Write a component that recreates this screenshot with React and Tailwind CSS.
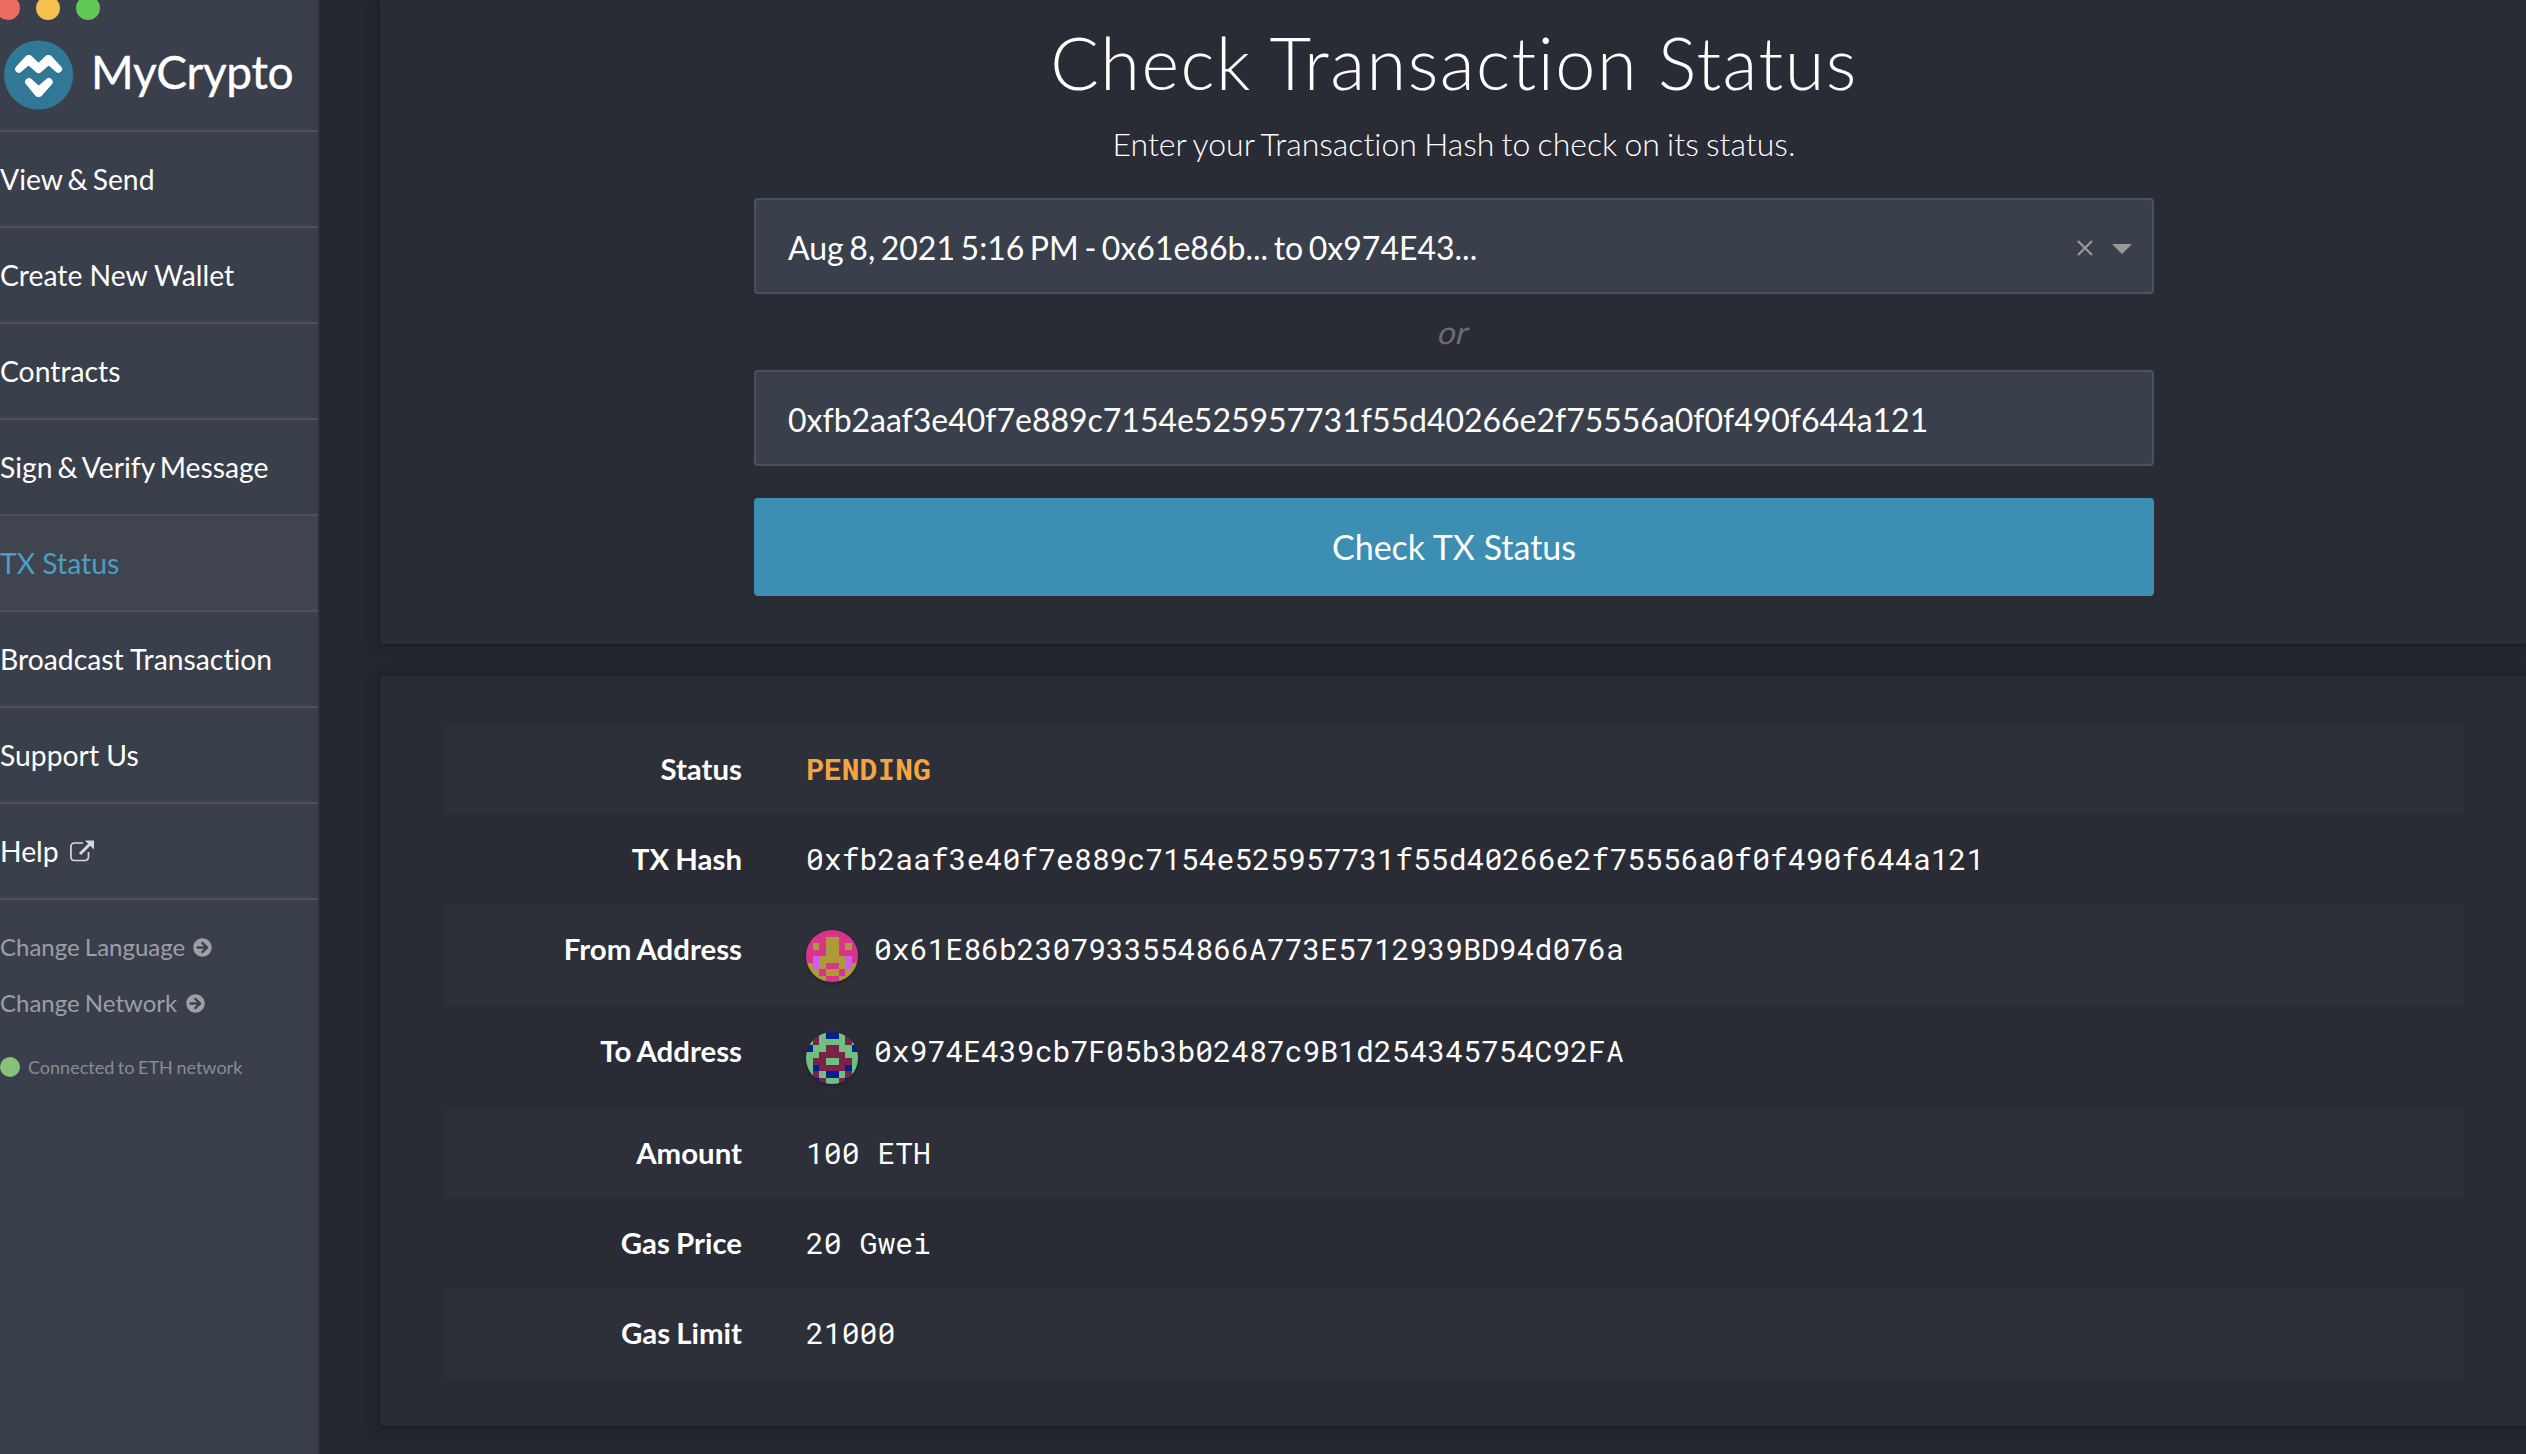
import React from "react";
import { FaArrowCircleRight } from "react-icons/fa";

const NAV = [
  "View & Send",
  "Create New Wallet",
  "Contracts",
  "Sign & Verify Message",
  "TX Status",
  "Broadcast Transaction",
  "Support Us",
  "Help",
];

const HASH = "0xfb2aaf3e40f7e889c7154e525957731f55d40266e2f75556a0f0f490f644a121";

// Left half of each 8x8 identicon; every row is mirrored when drawn.
const FROM_ICON = {
  colors: { a: "#d6358b", b: "#af9a3a", c: "#cf5cf6" },
  rows: ["aaaa", "aaab", "abab", "aaab", "acbb", "bcba", "bbab", "bbba"],
};
const TO_ICON = {
  colors: { a: "#6fbf80", b: "#7b2249", c: "#03208c" },
  rows: ["abac", "abaa", "caab", "aabb", "abba", "acbb", "abac", "acba"],
};

const ROWS = [
  { label: "Status", value: "PENDING", pending: true },
  { label: "TX Hash", value: HASH },
  { label: "From Address", value: "0x61E86b2307933554866A773E5712939BD94d076a", icon: FROM_ICON },
  { label: "To Address", value: "0x974E439cb7F05b3b02487c9B1d254345754C92FA", icon: TO_ICON },
  { label: "Amount", value: "100 ETH" },
  { label: "Gas Price", value: "20 Gwei" },
  { label: "Gas Limit", value: "21000" },
];

function Identicon({ icon }) {
  return (
    <div className="mt-[26px] mr-4 size-[52px] shrink-0 overflow-hidden rounded-full shadow-[0_2px_4px_rgba(0,0,0,0.25)]">
      <svg viewBox="0 0 8 8" className="block size-full" shapeRendering="crispEdges">
        {icon.rows.map((row, y) =>
          (row + row.split("").reverse().join("")).split("").map((c, x) => (
            <rect key={`${x}-${y}`} x={x} y={y} width="1" height="1" fill={icon.colors[c]} />
          ))
        )}
      </svg>
    </div>
  );
}

function Logo() {
  return (
    <div className="flex h-[70px] items-center pl-1">
      <svg viewBox="0 0 70 70" className="size-[70px] shrink-0" stroke="#fff" fill="#fff" strokeLinejoin="round">
        <circle cx="34.6" cy="35" r="34.600" fill="#317896" stroke="none" />
        <path
          d="M14.700 29.200L24.300 18.700H25.300L34.600 27.800L44 18.700H45L54.500 29.200L44.700 20.800L34.600 29.500L24.600 20.800Z"
          strokeWidth="7.200"
        />
        <path d="M24.900 41.900L34.600 50.600L44.900 41.900L34.900 53.200H34.300Z" strokeWidth="7.600" />
      </svg>
      <span className="ml-[17px] pb-1.5 text-[46px] leading-none tracking-[-0.3px] text-white [-webkit-text-stroke:0.4px_white]">
        MyCrypto
      </span>
    </div>
  );
}

function ExternalIcon() {
  return (
    <svg viewBox="0 0 24 22" className="ml-[11px] h-[22px] w-6" fill="none" stroke="#d6d7da">
      <path d="M13 3H4.5A3.700 3.700 0 0 0 .9 6.500V17A3.700 3.700 0 0 0 4.500 20.500H15A3.700 3.700 0 0 0 18.500 17V12" strokeWidth="1.700" />
      <path d="M10 14L20 4" strokeWidth="3" />
      <path d="M15 .5H24V9.500Z" fill="#d6d7da" stroke="none" />
    </svg>
  );
}

function Sidebar() {
  return (
    <aside className="flex h-full w-80 shrink-0 flex-col border-r-2 border-[#2b2f38] bg-[#3a404b]">
      <div className="flex h-5 items-end overflow-hidden">
        <div className="-ml-1 flex gap-4">
          <span className="size-6 rounded-full bg-[#ed6b60]" />
          <span className="size-6 rounded-full bg-[#f6c04f]" />
          <span className="size-6 rounded-full bg-[#61c755]" />
        </div>
      </div>
      <div className="h-[110px] pt-5">
        <Logo />
      </div>
      <nav className="border-t-2 border-[#4b505c] text-[28.300px] whitespace-nowrap">
        {NAV.map((item) => (
          <a
            key={item}
            className={
              "flex h-24 items-center border-b-2 border-[#4b505c] " +
              (item === "TX Status" ? "bg-[#3f444f] text-[#4a9fc4] " : "text-white ") +
              (item.includes("&") ? "[word-spacing:-2.200px]" : "[word-spacing:0px]")
            }
          >
            {item}
            {item === "Help" && <ExternalIcon />}
          </a>
        ))}
      </nav>
      <div className="mt-[19px] flex h-14 items-center text-2xl text-[#9c9fa5]">
        Change Language <FaArrowCircleRight className="ml-2 size-[19px]" />
      </div>
      <div className="flex h-14 items-center text-2xl text-[#9c9fa5]">
        Change Network <FaArrowCircleRight className="ml-[9px] size-[19px]" />
      </div>
      <div className="mt-4 flex h-10 items-center text-lg text-[#898c93]">
        <span className="mr-2 size-5 rounded-full bg-[#86c27a]" />
        Connected to ETH network
      </div>
    </aside>
  );
}

function CheckPanel() {
  return (
    <section className="flex h-[644px] flex-col items-center rounded-b bg-[#2a2c35] shadow-[0_1px_3px_rgba(0,0,0,0.3),0_2px_12px_rgba(34,34,34,0.9)]">
      <h1 className="mt-[17px] h-[90px] text-[72px] leading-[90px] font-light tracking-[1.500px] text-white">
        Check Transaction Status
      </h1>
      <p className="mt-[17px] h-10 text-[32px] leading-10 font-light [word-spacing:-1.500px] text-white">
        Enter your Transaction Hash to check on its status.
      </p>
      <div className="mt-[34px] flex h-24 w-[1400px] items-center rounded border-2 border-[#4b515f] bg-[#3a404b] pl-8 text-[32px] text-white">
        <span className="pt-[3px] [word-spacing:-2.600px]">Aug 8, 2021 5:16 PM - 0x61e86b... to 0x974E43...</span>
        <svg viewBox="0 0 56 16" className="mt-1 mr-5 ml-auto h-4 w-14" stroke="#999" fill="none">
          <path d="M2 1L16 15M16 1L2 15" strokeWidth="2.200" />
          <path d="M36 4H56L46 14Z" fill="#999" stroke="none" />
        </svg>
      </div>
      <div className="flex h-[76px] items-center text-[32px] text-[#6b6d74]">
        <span className="inline-block -skew-x-[14deg]">or</span>
      </div>
      <div className="flex h-24 w-[1400px] items-center rounded border-2 border-[#4b515f] bg-[#3a404b] pl-8 text-[32px] text-white">
        <span className="pt-[3px] tracking-[-0.020px]">{HASH}</span>
      </div>
      <button className="mt-8 h-[98px] w-[1400px] rounded bg-[#3c8eb3] pb-0.5 text-[34px] text-white">
        Check TX Status
      </button>
    </section>
  );
}

function DetailsPanel() {
  return (
    <section className="mt-8 h-[750px] rounded bg-[#2a2c35] px-16 pt-12 shadow-[0_1px_3px_rgba(0,0,0,0.3),0_2px_12px_rgba(34,34,34,0.9)]">
      {ROWS.map((row, i) => (
        <div
          key={row.label}
          className={
            (i % 2 === 0 ? "bg-[#2e3039] " : "") + (row.icon ? "flex h-[102px]" : "flex h-[90px]")
          }
        >
          <div className="w-[298px] shrink-0 text-right text-[29.400px] leading-[90px] font-bold text-white">
            {row.label}
          </div>
          <div className="ml-16 flex font-['Roboto_Mono','DejaVu_Sans_Mono',monospace] text-[29.750px] leading-[90px] [word-spacing:0] text-white">
            {row.icon && <Identicon icon={row.icon} />}
            <span className={row.pending ? "font-bold text-[#f2a541]" : ""}>{row.value}</span>
          </div>
        </div>
      ))}
    </section>
  );
}

export default function App() {
  return (
    <div className="flex h-[1454px] w-[2526px] overflow-hidden bg-[#22262e] font-[Lato,sans-serif] [font-variant-ligatures:none] [word-spacing:-1px]">
      <Sidebar />
      <main className="ml-[60px] w-[2148px] shrink-0">
        <CheckPanel />
        <DetailsPanel />
      </main>
    </div>
  );
}
